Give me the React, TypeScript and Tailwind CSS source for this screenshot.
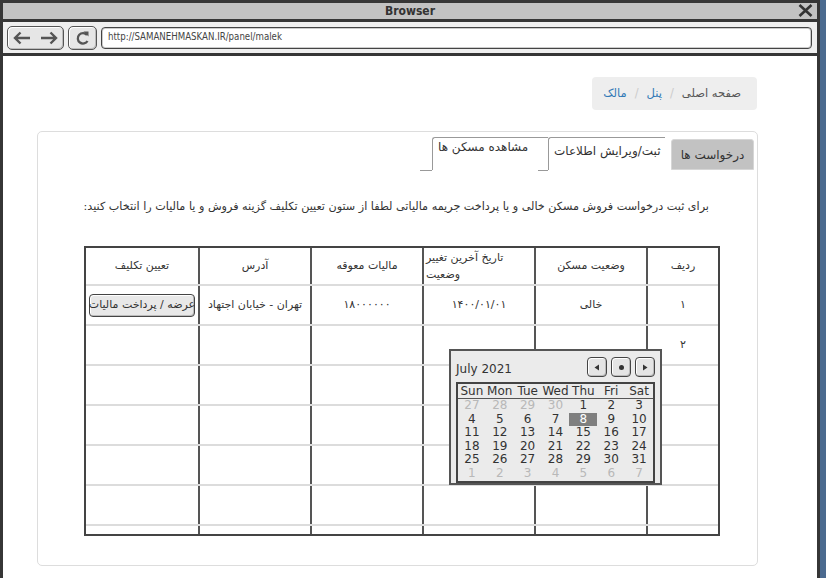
import React from 'react';

const rows = [
  { id: '۱', status: 'خالی', date: '۱۴۰۰/۰۱/۰۱', tax: '۱۸۰۰۰۰۰۰', addr: 'تهران - خیابان اجتهاد', action: true },
  { id: '۲' },
  {},
  {},
  {},
  {},
] as { id?: string; status?: string; date?: string; tax?: string; addr?: string; action?: boolean }[];

const days = ['Sun', 'Mon', 'Tue', 'Wed', 'Thu', 'Fri', 'Sat'];

const weeks: { d: number; muted?: boolean }[][] = [
  [{ d: 27, muted: true }, { d: 28, muted: true }, { d: 29, muted: true }, { d: 30, muted: true }, { d: 1 }, { d: 2 }, { d: 3 }],
  [4, 5, 6, 7, 8, 9, 10].map((d) => ({ d })),
  [11, 12, 13, 14, 15, 16, 17].map((d) => ({ d })),
  [18, 19, 20, 21, 22, 23, 24].map((d) => ({ d })),
  [25, 26, 27, 28, 29, 30, 31].map((d) => ({ d })),
  [1, 2, 3, 4, 5, 6, 7].map((d) => ({ d, muted: true })),
];

const SmallBtn = ({ children }: { children: React.ReactNode }) => (
  <div className="w-[20px] h-[20px] rounded-[4px] border-[1.5px] border-[#444] bg-[#e4e4e4] shadow-[inset_1px_1px_0_#fff,inset_-1px_-1px_0_#bbb] flex items-center justify-center">
    {children}
  </div>
);

const Calendar = () => (
  <div className="absolute left-[363px] top-[101px] w-[213px] h-[136px] border-2 border-[#555] bg-[#ebebeb] font-['DejaVu_Sans',sans-serif] text-[#333]">
    <div className="flex items-center justify-between pl-[5px] pr-[5px] pt-[5px]">
      <span className="text-[12px] mt-[4px]">July 2021</span>
      <div className="flex gap-[4px]">
        <SmallBtn>
          <svg width="6" height="7" viewBox="0 0 6 7"><path d="M5 0.5 L0.5 3.5 L5 6.5 Z" fill="#333" /></svg>
        </SmallBtn>
        <SmallBtn>
          <div className="w-[5px] h-[5px] rounded-full bg-[#333]" />
        </SmallBtn>
        <SmallBtn>
          <svg width="6" height="7" viewBox="0 0 6 7"><path d="M1 0.5 L5.5 3.5 L1 6.5 Z" fill="#333" /></svg>
        </SmallBtn>
      </div>
    </div>
    <div className="mx-[5px] mt-[4px] border-2 border-[#444] pb-[1px]">
      <div className="grid grid-cols-7 border-b border-[#555] text-[12px] leading-[14px] h-[15px]">
        {days.map((d) => (
          <div key={d} className="text-center">{d}</div>
        ))}
      </div>
      {weeks.map((w, i) => (
        <div key={i} className="grid grid-cols-7 text-[12px] leading-[13.5px]">
          {w.map((c, j) => (
            <div
              key={j}
              className={
                c.d === 8 && !c.muted
                  ? 'text-center bg-[#7f7f7f] text-white'
                  : c.muted
                  ? 'text-center text-[#b8b8b8]'
                  : 'text-center'
              }
            >
              {c.d}
            </div>
          ))}
        </div>
      ))}
    </div>
  </div>
);

const cols = ['w-[72px]', 'w-[112px]', 'w-[112px]', 'w-[112px]', 'w-[112px]', 'w-[112px]'];

const App: React.FC = () => {
  return (
    <div className="w-[826px] h-[578px] bg-[#4b6a8f] overflow-hidden font-['DejaVu_Sans',sans-serif]">
      <div className="w-[820px] h-[578px] bg-[#363636] pt-[3px] px-[3px] flex flex-col">
        {/* title bar */}
        <div className="h-[16px] bg-[#c2c2c2] flex items-center justify-center relative">
          <span className="font-['DejaVu_Sans_Condensed','DejaVu_Sans',sans-serif] font-bold text-[12px] text-[#333]">Browser</span>
          <svg className="absolute right-[4px] top-[1px]" width="15" height="13" viewBox="0 0 15 13">
            <path d="M1.5 1 L13.5 12 M13.5 1 L1.5 12" stroke="#333" strokeWidth="2.6" />
          </svg>
        </div>
        <div className="h-[3px]" />
        {/* toolbar */}
        <div className="h-[31px] bg-[#efefef] flex items-center gap-[4px] pl-[4px] pr-[5px]">
          <div className="w-[57px] h-[24px] rounded-[5px] border-[1.5px] border-[#555] bg-[#e6e6e6] shadow-[inset_1px_1px_0_#fff,inset_-1px_-1px_0_#bbb] flex items-center justify-center gap-[9px]">
            <svg width="18" height="14" viewBox="0 0 18 14"><path d="M17 7 H2 M7.5 1.5 L2 7 L7.5 12.5" stroke="#555" strokeWidth="2.4" fill="none" /></svg>
            <svg width="18" height="14" viewBox="0 0 18 14"><path d="M1 7 H16 M10.5 1.5 L16 7 L10.5 12.5" stroke="#555" strokeWidth="2.4" fill="none" /></svg>
          </div>
          <div className="w-[29px] h-[24px] rounded-[5px] border-[1.5px] border-[#555] bg-[#e6e6e6] shadow-[inset_1px_1px_0_#fff,inset_-1px_-1px_0_#bbb] flex items-center justify-center">
            <svg width="14" height="16" viewBox="0 0 14 16">
              <path d="M11 5 A5.2 5.2 0 1 0 11.5 11" stroke="#555" strokeWidth="2.3" fill="none" />
              <path d="M7.5 1.5 L12.5 1.5 L12.5 6.5 Z" fill="#555" />
            </svg>
          </div>
          <div className="flex-1 h-[22px] rounded-[4px] border-[1.5px] border-[#444] bg-white shadow-[inset_0_0_0_1px_#ccc] flex items-center pl-[6px]">
            <span className="font-['DejaVu_Sans_Condensed','DejaVu_Sans',sans-serif] text-[9.6px] text-[#444]">http://SAMANEHMASKAN.IR/panel/malek</span>
          </div>
        </div>
        <div className="h-[3px]" />
        {/* page */}
        <div className="flex-1 bg-white">
          <div className="pt-[21px] flex justify-end pr-[60px]">
            <div dir="rtl" className="h-[33px] rounded-[4px] bg-[#eeeeee] flex items-center pr-[16px] pl-[11px] gap-[8px] text-[11.5px] whitespace-nowrap">
              <span className="text-[#555]">صفحه اصلی</span>
              <span className="text-[#ccc]">/</span>
              <span className="text-[#337ab7]">پنل</span>
              <span className="text-[#ccc]">/</span>
              <span className="text-[#337ab7]">مالک</span>
            </div>
          </div>

          <div dir="rtl" className="mt-[21px] ml-[34px] w-[721px] h-[435px] border border-[#dddddd] rounded-[5px]">
            {/* tabs */}
            <div className="flex items-end pt-[5px] pr-[3px] text-[12px] text-[#333]">
              <div className="w-[83px] h-[31px] bg-[#c2c2c2] rounded-t-[3px] border border-[#d6d6d6] flex items-center justify-center">
                درخواست ها
              </div>
              <div className="relative w-[117px] h-[33px] mr-[6px] border-t border-l border-[#999] rounded-tl-[3px] text-left pl-[5px] pt-[4px]">
                ثبت/ویرایش اطلاعات
                <span className="absolute -left-[11px] -bottom-px w-[10px] h-px bg-[#999]" />
              </div>
              <div className="relative w-[116px] h-[33px] border-t border-l border-[#999] rounded-tl-[3px] text-left pl-[5px] pt-0">
                مشاهده مسکن ها
                <span className="absolute -left-[13px] -bottom-px w-[12px] h-px bg-[#999]" />
              </div>
            </div>

            <p className="mt-[30px] pr-[48px] text-[11.2px] text-[#333] leading-[14px] whitespace-nowrap">
              برای ثبت درخواست فروش مسکن خالی و یا پرداخت جریمه مالیاتی لطفا از ستون تعیین تکلیف گزینه فروش و یا مالیات را انتخاب کنید:
            </p>

            {/* table */}
            <div className="relative mt-[32px] mr-[37px] w-[636px] border-2 border-[#444] text-[11px] text-[#333]">
              <div className="flex h-[38px] border-b-2 border-[#dcdcdc]">
                <div className={`${cols[0]} flex items-center justify-center border-l-2 border-[#555]`}>ردیف</div>
                <div className={`${cols[1]} flex items-center justify-center border-l-2 border-[#555]`}>وضعیت مسکن</div>
                <div className={`${cols[2]} text-left pl-[2px] leading-[17px] pt-[1px] border-l-2 border-[#555]`}>تاریخ آخرین تغییر وضعیت</div>
                <div className={`${cols[3]} flex items-center justify-center border-l-2 border-[#555]`}>مالیات معوقه</div>
                <div className={`${cols[4]} flex items-center justify-center border-l-2 border-[#555]`}>آدرس</div>
                <div className={`${cols[5]} flex items-center justify-center`}>تعیین تکلیف</div>
              </div>
              {rows.map((r, i) => (
                <div key={i} className="flex h-[40px] border-b-2 border-[#dcdcdc]">
                  <div className={`${cols[0]} flex items-center justify-center border-l-2 border-[#555]`}>{r.id}</div>
                  <div className={`${cols[1]} flex items-center justify-center border-l-2 border-[#555]`}>{r.status}</div>
                  <div className={`${cols[2]} flex items-center justify-center border-l-2 border-[#555]`}>{r.date}</div>
                  <div className={`${cols[3]} flex items-center justify-center border-l-2 border-[#555]`}>{r.tax}</div>
                  <div className={`${cols[4]} flex items-center justify-center border-l-2 border-[#555]`}>{r.addr}</div>
                  <div className={`${cols[5]} flex items-center justify-center`}>
                    {r.action && (
                      <div className="w-[106px] h-[23px] rounded-[4px] border-[1.5px] border-[#444] bg-[#e8e8e8] shadow-[inset_1px_1px_0_#fff,inset_-1px_-1px_0_#bbb] flex items-center justify-center whitespace-nowrap">
                        عرضه / پرداخت مالیات
                      </div>
                    )}
                  </div>
                </div>
              ))}
              <div className="flex h-[8px]">
                <div className={`${cols[0]} border-l-2 border-[#555]`} />
                <div className={`${cols[1]} border-l-2 border-[#555]`} />
                <div className={`${cols[2]} border-l-2 border-[#555]`} />
                <div className={`${cols[3]} border-l-2 border-[#555]`} />
                <div className={`${cols[4]} border-l-2 border-[#555]`} />
                <div className={cols[5]} />
              </div>
              <div dir="ltr">
                <Calendar />
              </div>
            </div>
          </div>
        </div>
      </div>
    </div>
  );
};

export default App;
